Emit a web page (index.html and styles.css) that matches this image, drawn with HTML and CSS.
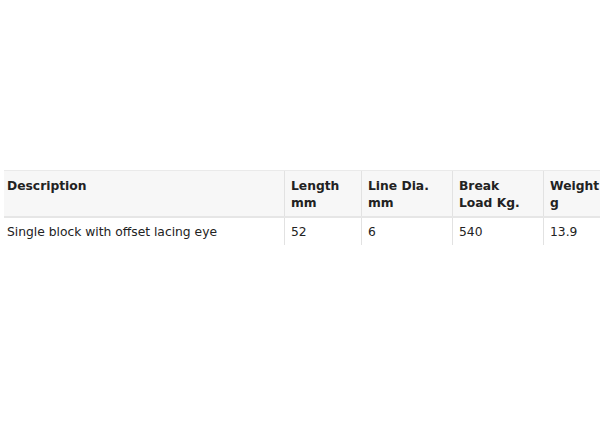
FILE: index.html
```html
<!DOCTYPE html>
<html>
<head>
<meta charset="utf-8">
<link rel="stylesheet" href="styles.css">
</head>
<body>
<div class="wrap">
<table class="spec">
<thead>
<tr>
<th class="c1">Description</th>
<th class="c2">Length<br>mm</th>
<th class="c3">Line Dia.<br>mm</th>
<th class="c4">Break<br>Load Kg.</th>
<th class="c5">Weight<br>g</th>
</tr>
</thead>
<tbody>
<tr>
<td class="c1">Single block with offset lacing eye</td>
<td class="c2">52</td>
<td class="c3">6</td>
<td class="c4">540</td>
<td class="c5">13.9</td>
</tr>
</tbody>
</table>
</div>
</body>
</html>
```
FILE: styles.css
```css
html, body {
  margin: 0;
  padding: 0;
  background: #fff;
  overflow: hidden;
}
.wrap {
  padding-top: 170px;
  padding-left: 4px;
  width: 700px;
}
.spec {
  border-collapse: collapse;
  font-family: "DejaVu Sans", Verdana, sans-serif;
  font-size: 12.3px;
  color: #222;
  line-height: 17px;
}
.spec th, .spec td {
  text-align: left;
  vertical-align: top;
  border-left: 1px solid #e2e2e2;
  padding-left: 6px;
  padding-right: 6px;
}
.spec th {
  background: #f7f7f7;
  font-weight: bold;
  padding-top: 7px;
  padding-bottom: 4px;
  border-top: 1px solid #eaeaea;
  border-bottom: 2px solid #e6e6e6;
}
.spec td {
  padding-top: 6px;
  padding-bottom: 4px;
}
.spec .c1 { border-left: none; padding-left: 3px; width: 271px; }
.spec .c2 { width: 64px; }
.spec .c3 { width: 78px; }
.spec .c4 { width: 78px; }
.spec .c5 { width: 60px; }
```
